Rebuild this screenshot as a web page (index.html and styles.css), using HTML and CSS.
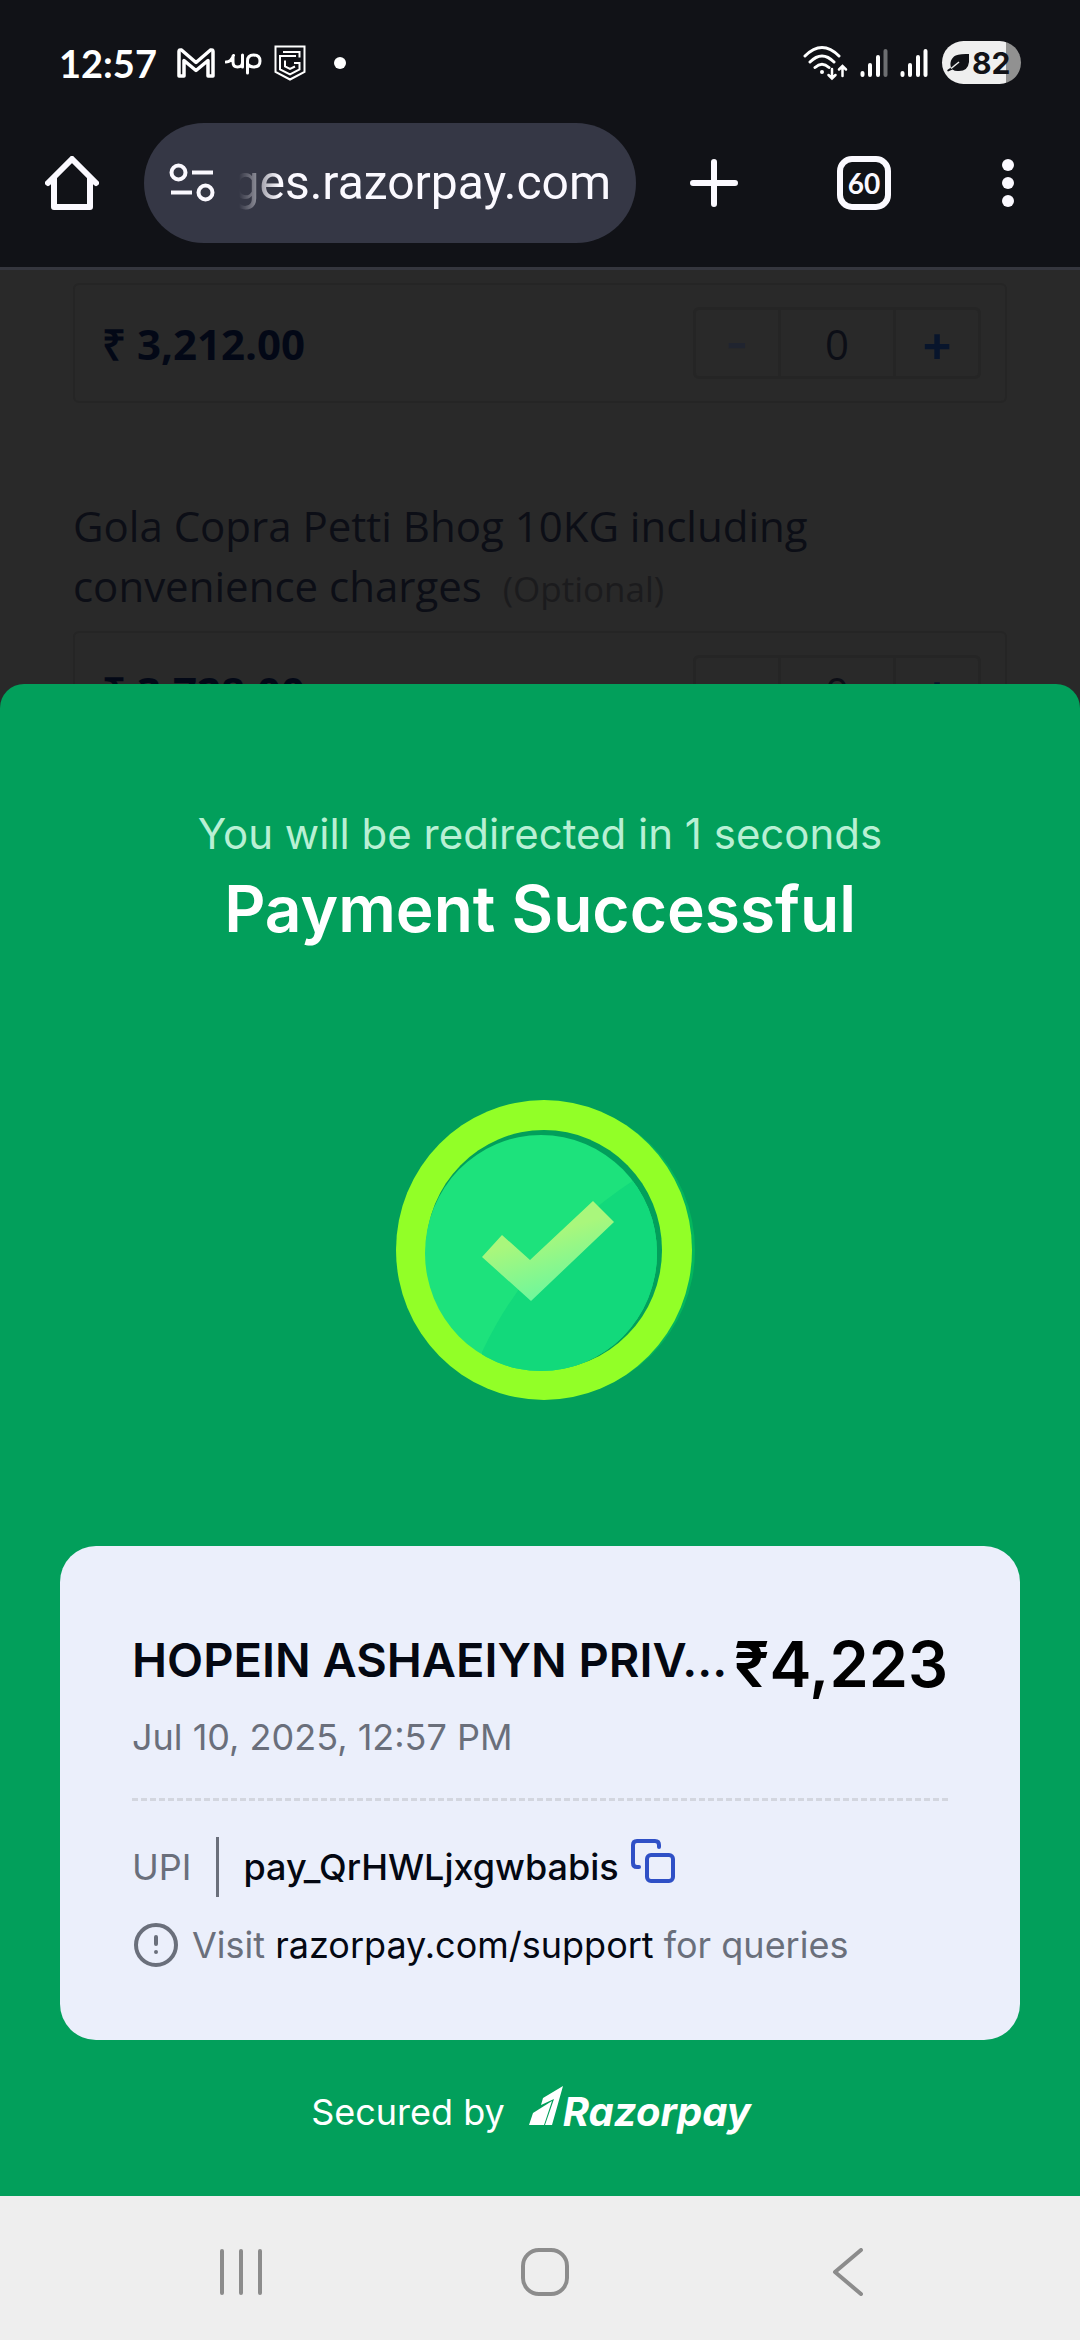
FILE: index.html
```
<!DOCTYPE html>
<html lang="en">
<head>
<meta charset="utf-8">
<meta name="viewport" content="width=device-width, initial-scale=1">
<title>Payment Successful</title>
<link rel="stylesheet" href="styles.css">
</head>
<body>
<header class="chrome">
  <div class="status">
    <div class="status-left">
      <span class="clock">12:57</span>
      <svg width="38" height="30" viewBox="0 0 38 30" fill="none" stroke="#fff" stroke-width="3.500" stroke-linejoin="round"><path d="M2 28V3.500Q2 1.500 4.500 2L19 14.500L33.500 2Q36 1.500 36 3.500V28H31V12.500L19 22.500L7 12.500V28Z"/></svg>
      <svg class="ico-up" width="37" height="24" viewBox="0 0 37 24" fill="none" stroke="#fff" stroke-width="3" stroke-linecap="round"><path d="M1 11Q6 11 8.500 4.500M8 5V11Q8 16 12.500 16Q17.500 16 17.500 11V4M17.500 11V16M22.500 22V10Q22.500 4 28.500 4Q35 4 35 10Q35 16 28.500 16Q25 16 22.500 13"/></svg>
      <svg width="32" height="36" viewBox="0 0 32 36" fill="none" stroke="#fff" stroke-width="2"><path d="M1.500 1.500H30.500V27L16 34.500L1.500 27Z"/><path d="M9 7H25.500V12.500M22 11H6V24.500L16 29.500L25.500 24.500V18H20"/><path d="M11 15.500V21.500L16 24L21 21.500"/></svg>
      <span class="more-dot"></span>
    </div>
    <div class="status-right">
      <svg width="45" height="36" viewBox="1 0 45 36" fill="none" stroke="#fff" stroke-width="3" stroke-linecap="round"><path d="M3 11Q20 -6 37 11M8 17Q20 5 32 17M13 22.500Q20 16 27 22.500"/><circle cx="20" cy="27" r="2" fill="#fff" stroke="none"/><path d="M30 24V33M26.500 30L30 33.500L33.500 30M40.500 31V22M37 24.500L40.500 21L44 24.500" stroke-width="2.500"/></svg>
      <svg class="ico-signal" width="28" height="30" viewBox="0 0 28 30" fill="none" stroke="#fff" stroke-width="4" stroke-linecap="round"><path d="M2.500 25V27M10 17V27M18 9V27"/><path d="M25.500 3V27" stroke="#6d6e71"/></svg>
      <svg class="ico-signal" width="28" height="30" viewBox="0 0 28 30" fill="none" stroke="#fff" stroke-width="4" stroke-linecap="round"><path d="M2.500 25V27M10 17V27M18 9V27M25.500 3V27"/></svg>
      <span class="battery"><svg width="22" height="20" viewBox="0 0 22 20"><path d="M22 1V9Q21 18 12 18Q8 18.500 5.500 16.500L1 18.500Q-.5 17.500 1 16.500L4 14.500Q2 8 7 3.500Q10 .5 22 1Z" fill="#111217"/><path d="M4 15.500L12 9" stroke="#efefef" stroke-width="1.500"/></svg>82</span>
    </div>
  </div>
  <nav class="toolbar" aria-label="Browser">
    <button class="icon-btn" aria-label="Home"><svg width="54" height="54" viewBox="0 0 54 54" fill="none" stroke="#fbf9ff" stroke-width="6" stroke-linecap="round" stroke-linejoin="round"><path d="M3 27L27 3L51 27M9 22V51H45V22"/></svg></button>
    <div class="url">
      <svg width="46" height="40" viewBox="0 0 46 40" fill="none" stroke="#fbf9ff" stroke-width="4"><circle cx="9.500" cy="9.500" r="7"/><circle cx="36.500" cy="29.500" r="7"/><path d="M23 9.500H44M2 29.500H23"/></svg>
      <span class="host"><span>ges.razorpay.com</span></span>
    </div>
    <div class="actions">
      <button class="icon-btn" aria-label="New tab"><svg width="48" height="48" viewBox="0 0 48 48" stroke="#fbf9ff" stroke-width="6" stroke-linecap="round"><path d="M3 24H45M24 3V45"/></svg></button>
      <button class="icon-btn tabs" aria-label="Tabs">60</button>
      <button class="icon-btn" aria-label="Menu"><svg width="12" height="48" viewBox="0 0 12 48" fill="#fbf9ff"><circle cx="6" cy="6" r="6"/><circle cx="6" cy="24" r="6"/><circle cx="6" cy="42" r="6"/></svg></button>
    </div>
  </nav>
</header>
<main class="view">
  <section class="page">
    <div class="price-row">
      <span class="price">₹ 3,212.00</span>
      <div class="stepper"><button class="step minus" aria-label="Decrease">-</button><input class="qty" value="0" aria-label="Quantity"><button class="step" aria-label="Increase">+</button></div>
    </div>
    <p class="item">Gola Copra Petti Bhog 10KG including convenience charges <span class="optional">(Optional)</span></p>
    <div class="price-row">
      <span class="price">₹ 3,728.00</span>
      <div class="stepper"><button class="step minus" aria-label="Decrease">-</button><input class="qty" value="0" aria-label="Quantity"><button class="step" aria-label="Increase">+</button></div>
    </div>
  </section>
  <section class="sheet">
    <p class="redirect">You will be redirected in 1 seconds</p>
    <h1 class="headline">Payment Successful</h1>
    <svg class="badge" width="312" height="304" viewBox="-12 0 312 304">
      <defs>
        <linearGradient id="tick" x1="0" y1="0" x2=".4" y2="1"><stop offset=".45" stop-color="#a9f77c"/><stop offset="1" stop-color="#6df79c"/></linearGradient>
        <clipPath id="disc"><ellipse cx="145" cy="155" rx="116" ry="118"/></clipPath>
      </defs>
      <ellipse cx="151" cy="152" rx="148" ry="148" fill="#04b65d"/>
      <ellipse cx="148" cy="152" rx="148" ry="150" fill="#92ff27"/>
      <ellipse cx="148" cy="152" rx="118" ry="120" fill="#029f5b"/>
      <g clip-path="url(#disc)">
        <rect width="300" height="304" fill="#1de27c"/>
        <path d="M86 254Q135 150 238 82L300 90V304H86Z" fill="#12d97b"/>
      </g>
      <path d="M86 159L106 137L134 162L197 103L218 124L135 203Z" fill="url(#tick)"/>
    </svg>
    <article class="receipt">
      <div class="receipt-head">
        <h2 class="payee">HOPEIN ASHAEIYN PRIV...</h2>
        <strong class="amount">₹4,223</strong>
      </div>
      <p class="date">Jul 10, 2025, 12:57 PM</p>
      <hr class="rule">
      <div class="line">
        <span class="method">UPI</span>
        <span class="pay-id">pay_QrHWLjxgwbabis</span>
        <button class="copy" aria-label="Copy payment ID"><svg width="44" height="44" viewBox="0 0 44 44" fill="none" stroke="#2f50c6" stroke-width="4" stroke-linecap="round" stroke-linejoin="round"><rect x="16" y="16" width="26" height="26" rx="4"/><path d="M8 28H6Q2 28 2 24V6Q2 2 6 2H24Q28 2 28 6V8"/></svg></button>
      </div>
      <div class="line help">
        <svg width="46" height="44" viewBox="-2 0 46 44" fill="none" stroke="#6a6f7b" stroke-width="4" stroke-linecap="round"><circle cx="22" cy="22" r="20"/><path d="M22 14V21M22 29V29.100"/></svg>
        <span>Visit <a class="support" href="#support">razorpay.com/support</a> for queries</span>
      </div>
    </article>
    <footer class="secured">
      <span>Secured by</span>
      <span class="brand"><svg width="34" height="40" viewBox="0 0 34 40" fill="#fff"><path d="M0 39L4 27L23 15L15 39Z"/><path d="M34 0L23 39H16L25 13L12 19L14 12Z"/></svg>Razorpay</span>
    </footer>
  </section>
</main>
<nav class="system-nav" aria-label="System">
  <button class="icon-btn" aria-label="Recents"><svg width="48" height="48" viewBox="0 0 48 48" stroke="#8c8c8c" stroke-width="4" stroke-linecap="round"><path d="M4 3V45M23 3V45M42 3V45"/></svg></button>
  <button class="icon-btn" aria-label="Home screen"><svg width="48" height="48" viewBox="0 0 48 48" fill="none" stroke="#8c8c8c" stroke-width="4"><rect x="2" y="2" width="44" height="44" rx="16"/></svg></button>
  <button class="icon-btn" aria-label="Back"><svg width="48" height="48" viewBox="0 0 48 48" fill="none" stroke="#8c8c8c" stroke-width="4" stroke-linecap="round" stroke-linejoin="round"><path d="M37 2L11 24L37 46"/></svg></button>
</nav>
</body>
</html>
```
FILE: styles.css
```
* { box-sizing: border-box; margin: 0; }
body {
  min-height: 100vh;
  display: flex;
  flex-direction: column;
  background: #292929;
  font-family: Inter, sans-serif;
}
svg { display: block; flex: none; }
button, input { font: inherit; color: inherit; padding: 0; border: 0; background: none; }

.chrome { background: #111217; border-bottom: 3px solid #35363e; color: #fbf9ff; }
.status {
  display: flex;
  justify-content: space-between;
  align-items: center;
  height: 123px;
  padding: 2px 59px 0 59px;
}
.status-left, .status-right { display: flex; align-items: center; }
.clock { font: bold 38px/48px Lato, sans-serif; margin-right: 20px; color: #fff; }
.ico-up { margin: 0 12px 0 10px; }
.more-dot { width: 12px; height: 12px; border-radius: 50%; background: #fff; margin-left: 28px; }
.ico-signal { margin-left: 12px; }
.battery {
  display: flex;
  align-items: center;
  gap: 3px;
  height: 43px;
  width: 79px;
  margin-left: 14px;
  padding-left: 5px;
  border-radius: 22px;
  background: linear-gradient(90deg, #efefef 81%, #919191 81%);
  color: #111217;
  font-size: 30px;
  font-weight: 700;
}
.toolbar { display: flex; align-items: center; height: 144px; padding: 0 66px 24px 45px; }
.icon-btn { display: flex; align-items: center; justify-content: center; }
.url {
  flex: 1;
  min-width: 0;
  display: flex;
  align-items: center;
  gap: 24px;
  height: 120px;
  margin: 0 54px 0 45px;
  padding: 0 25px;
  border-radius: 60px;
  background: #353745;
}
.host {
  flex: 1;
  min-width: 0;
  display: flex;
  justify-content: flex-end;
  overflow: hidden;
  font: 48px/64px Roboto, sans-serif;
  -webkit-mask-image: linear-gradient(90deg, transparent, #000 40px);
  mask-image: linear-gradient(90deg, transparent, #000 40px);
}
.actions { display: flex; align-items: center; gap: 99px; }
.tabs {
  width: 54px;
  height: 54px;
  margin-right: 12px;
  border: 6px solid #fbf9ff;
  border-radius: 15px;
  font: bold 28px/40px Lato, sans-serif;
}

.view { flex: 1; position: relative; overflow: hidden; }
.page { padding: 13px 73px 0; font-family: "Open Sans", sans-serif; color: #0c0e16; }
.price-row {
  display: flex;
  align-items: center;
  justify-content: space-between;
  height: 120px;
  padding: 0 24px 0 27px;
  border: 2px solid #252525;
  border-radius: 6px;
}
.price { font-size: 42px; font-weight: 700; color: #030816; }
.stepper { display: flex; height: 72px; border: 3px solid #252525; border-radius: 6px; font-size: 42px; }
.step { width: 82px; color: #08152c; font: 600 50px/60px Inter, sans-serif; }
.minus { color: #20242f; }
.qty { width: 118px; text-align: center; border: solid #252525; border-width: 0 3px; }
.item { padding: 93px 0 12px; font-size: 42px; line-height: 60px; }
.optional { margin-left: 10px; font-size: 35px; color: #1b1b1d; }

.sheet {
  position: absolute;
  inset: auto 0 0;
  display: flex;
  flex-direction: column;
  align-items: center;
  padding: 120px 60px 57px;
  border-radius: 24px 24px 0 0;
  background: #029f5b;
  color: #fff;
}
.redirect { font-size: 42px; line-height: 60px; color: #b8f0d4; }
.headline { font-size: 64px; line-height: 84px; font-weight: 600; margin-top: 3px; }
.badge { margin: 147px 0 144px; }
.receipt {
  align-self: stretch;
  padding: 72px 72px 68px;
  border-radius: 36px;
  background: #ebeffb;
  color: #040812;
}
.receipt-head { display: flex; justify-content: space-between; align-items: flex-start; gap: 6px; white-space: nowrap; }
.payee { font-size: 47px; line-height: 84px; font-weight: 600; }
.amount { font-size: 63px; line-height: 92px; font-weight: 600; color: #000; }
.date, .line, .secured { font-size: 36px; line-height: 54px; }
.date { color: #6a6f7b; }
.rule { border: 0; border-top: 3px dashed #d3d6df; margin: 34px 0 36px; }
.line { display: flex; align-items: center; }
.method { color: #6a6f7b; line-height: 60px; border-right: 3px solid #6a6f7b; padding-right: 25px; margin-right: 24px; }
.pay-id { font-weight: 500; }
.copy { margin-left: 12px; padding-bottom: 12px; }
.help { margin-top: 21px; gap: 14px; color: #6a6f7b; }
.support { color: #040812; text-decoration: none; }
.secured { display: flex; align-items: center; gap: 24px; margin-top: 45px; padding-right: 18px; }
.brand { display: flex; align-items: baseline; font: italic bold 40px/54px Inter, sans-serif; }

.system-nav {
  display: flex;
  align-items: center;
  justify-content: space-between;
  height: 144px;
  padding: 8px 208px 0 218px;
  background: #eee;
}
```
